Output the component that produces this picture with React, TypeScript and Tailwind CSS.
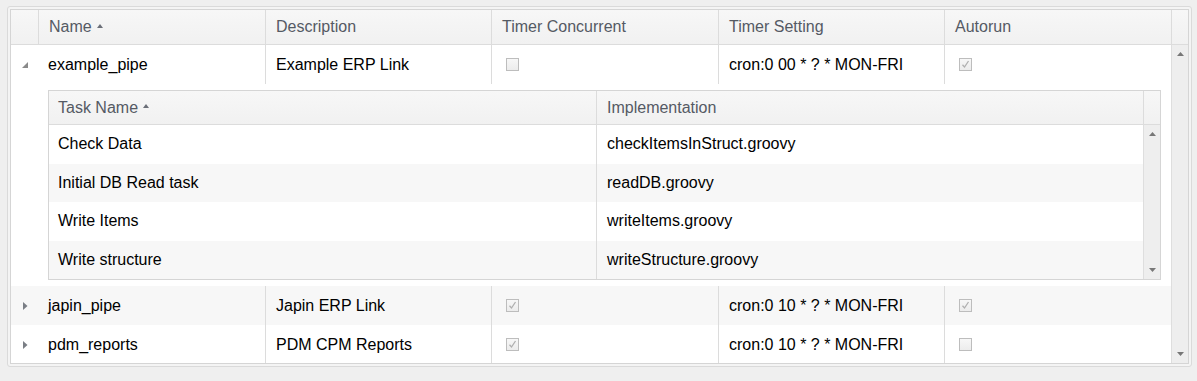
import React from "react";

const SortUp = () => (
  <svg width="6" height="4" viewBox="0 0 6 4" className="ml-[5px] mt-[-3px]">
    <polygon points="0,4 3,0 6,4" fill="#6b6f78" />
  </svg>
);

const Expanded = () => (
  <svg width="6" height="6" viewBox="0 0 6 6">
    <polygon points="0,6 6,0 6,6" fill="#8a8a8a" />
  </svg>
);

const Collapsed = () => (
  <svg width="5" height="8" viewBox="0 0 5 8">
    <polygon points="0,0 4.5,4 0,8" fill="#7a7e85" />
  </svg>
);

const Check = ({ checked }: { checked: boolean }) => (
  <div className="w-[13px] h-[13px] border border-[#bdbdbd] bg-gradient-to-b from-[#f7f7f7] to-[#ececec] flex items-center justify-center">
    {checked && (
      <svg width="11" height="11" viewBox="0 0 11 11">
        <path d="M2.5 5.8 L4.5 8 L8.5 2" stroke="#b0b0b0" strokeWidth="1.3" fill="none" />
      </svg>
    )}
  </div>
);

const ArrowUp = () => (
  <svg width="7" height="4" viewBox="0 0 7 4">
    <polygon points="0,4 3.5,0 7,4" fill="#777" />
  </svg>
);
const ArrowDown = () => (
  <svg width="7" height="4" viewBox="0 0 7 4">
    <polygon points="0,0 3.5,4 7,0" fill="#777" />
  </svg>
);

const Scrollbar = ({ h }: { h: string }) => (
  <div className={`w-[17px] ${h} shrink-0 border-l border-[#dedede] bg-[#eeeeee] flex flex-col items-center justify-between py-[7px]`}>
    <ArrowUp />
    <ArrowDown />
  </div>
);

const headerCls =
  "h-full flex items-center px-[10px] border-l border-[#dcdcdc] text-[#555a64]";

type Row = {
  name: string;
  desc: string;
  conc: boolean;
  timer: string;
  auto: boolean;
  alt: boolean;
  expanded: boolean;
  h: string;
};

const rows: Row[] = [
  { name: "example_pipe", desc: "Example ERP Link", conc: false, timer: "cron:0 00 * ? * MON-FRI", auto: true, alt: false, expanded: true, h: "h-[39px]" },
  { name: "japin_pipe", desc: "Japin ERP Link", conc: true, timer: "cron:0 10 * ? * MON-FRI", auto: true, alt: true, expanded: false, h: "h-[39px]" },
  { name: "pdm_reports", desc: "PDM CPM Reports", conc: true, timer: "cron:0 10 * ? * MON-FRI", auto: false, alt: false, expanded: false, h: "h-[39px]" },
];

const tasks = [
  ["Check Data", "checkItemsInStruct.groovy"],
  ["Initial DB Read task", "readDB.groovy"],
  ["Write Items", "writeItems.groovy"],
  ["Write structure", "writeStructure.groovy"],
];

const MainRow = ({ r }: { r: Row }) => (
  <div className={`flex ${r.h} shrink-0 ${r.alt ? "bg-[#f7f7f7]" : "bg-white"} text-black`}>
    <div className="w-[27px] shrink-0 flex items-center justify-center pl-[1px]">
      {r.expanded ? <Expanded /> : <Collapsed />}
    </div>
    <div className="w-[227px] shrink-0 flex items-center px-[10px]">{r.name}</div>
    <div className="w-[226px] shrink-0 flex items-center px-[10px] border-l border-[#dcdcdc]">{r.desc}</div>
    <div className="w-[227px] shrink-0 flex items-center px-[14px] border-l border-[#dcdcdc]">
      <Check checked={r.conc} />
    </div>
    <div className="w-[226px] shrink-0 flex items-center px-[10px] border-l border-[#dcdcdc]">{r.timer}</div>
    <div className="w-[227px] shrink-0 flex items-center px-[14px] border-l border-[#dcdcdc]">
      <Check checked={r.auto} />
    </div>
  </div>
);

const Detail = () => (
  <div className="flex h-[202px] shrink-0 bg-white">
    <div className="w-[27px] shrink-0" />
    <div className="w-[1133px] shrink-0 pt-[6px] px-[10px]">
      <div className="border border-[#d5d5d5] bg-white">
        <div className="flex h-[34px] border-b border-[#dcdcdc] bg-gradient-to-b from-[#f7f7f7] to-[#f1f1f1] text-[#555a64]">
          <div className="w-[547px] shrink-0 flex items-center px-[9px]">
            Task Name
            <SortUp />
          </div>
          <div className="w-[547px] shrink-0 flex items-center px-[10px] border-l border-[#dcdcdc]">Implementation</div>
          <div className="w-[17px] shrink-0 border-l border-[#dcdcdc]" />
        </div>
        <div className="flex h-[154px] overflow-hidden">
          <div className="w-[1094px] shrink-0 flex flex-col">
            {tasks.map(([a, b], i) => (
              <div key={a} className={`flex h-[38.5px] shrink-0 text-black ${i % 2 ? "bg-[#f7f7f7]" : "bg-white"}`}>
                <div className="w-[547px] shrink-0 flex items-center px-[9px]">{a}</div>
                <div className="w-[547px] shrink-0 flex items-center px-[10px] border-l border-[#dcdcdc]">{b}</div>
              </div>
            ))}
          </div>
          <Scrollbar h="h-[154px]" />
        </div>
      </div>
    </div>
  </div>
);

export default function App() {
  return (
    <div className="min-h-[381px] bg-[#efefef] pt-[6px] pl-[7px] font-['Liberation_Sans',Arial,sans-serif] text-[16px]">
      <div className="w-[1185px] h-[361px] rounded-[3px] border border-[#dadada] bg-[#f4f4f4] p-[2px]">
        <div className="border border-[#d5d5d5] bg-white">
          <div className="flex h-[35px] border-b border-[#dcdcdc] bg-gradient-to-b from-[#f7f7f7] to-[#f1f1f1]">
            <div className="w-[27px] shrink-0" />
            <div className={`w-[227px] shrink-0 ${headerCls}`}>
              Name
              <SortUp />
            </div>
            <div className={`w-[226px] shrink-0 ${headerCls}`}>Description</div>
            <div className={`w-[227px] shrink-0 ${headerCls}`}>Timer Concurrent</div>
            <div className={`w-[226px] shrink-0 ${headerCls}`}>Timer Setting</div>
            <div className={`w-[227px] shrink-0 ${headerCls}`}>Autorun</div>
            <div className="w-[17px] shrink-0 border-l border-[#dcdcdc]" />
          </div>
          <div className="flex h-[318px] overflow-hidden">
            <div className="w-[1160px] shrink-0 flex flex-col">
              <MainRow r={rows[0]} />
              <Detail />
              <MainRow r={rows[1]} />
              <MainRow r={rows[2]} />
            </div>
            <Scrollbar h="h-[318px]" />
          </div>
        </div>
      </div>
    </div>
  );
}
